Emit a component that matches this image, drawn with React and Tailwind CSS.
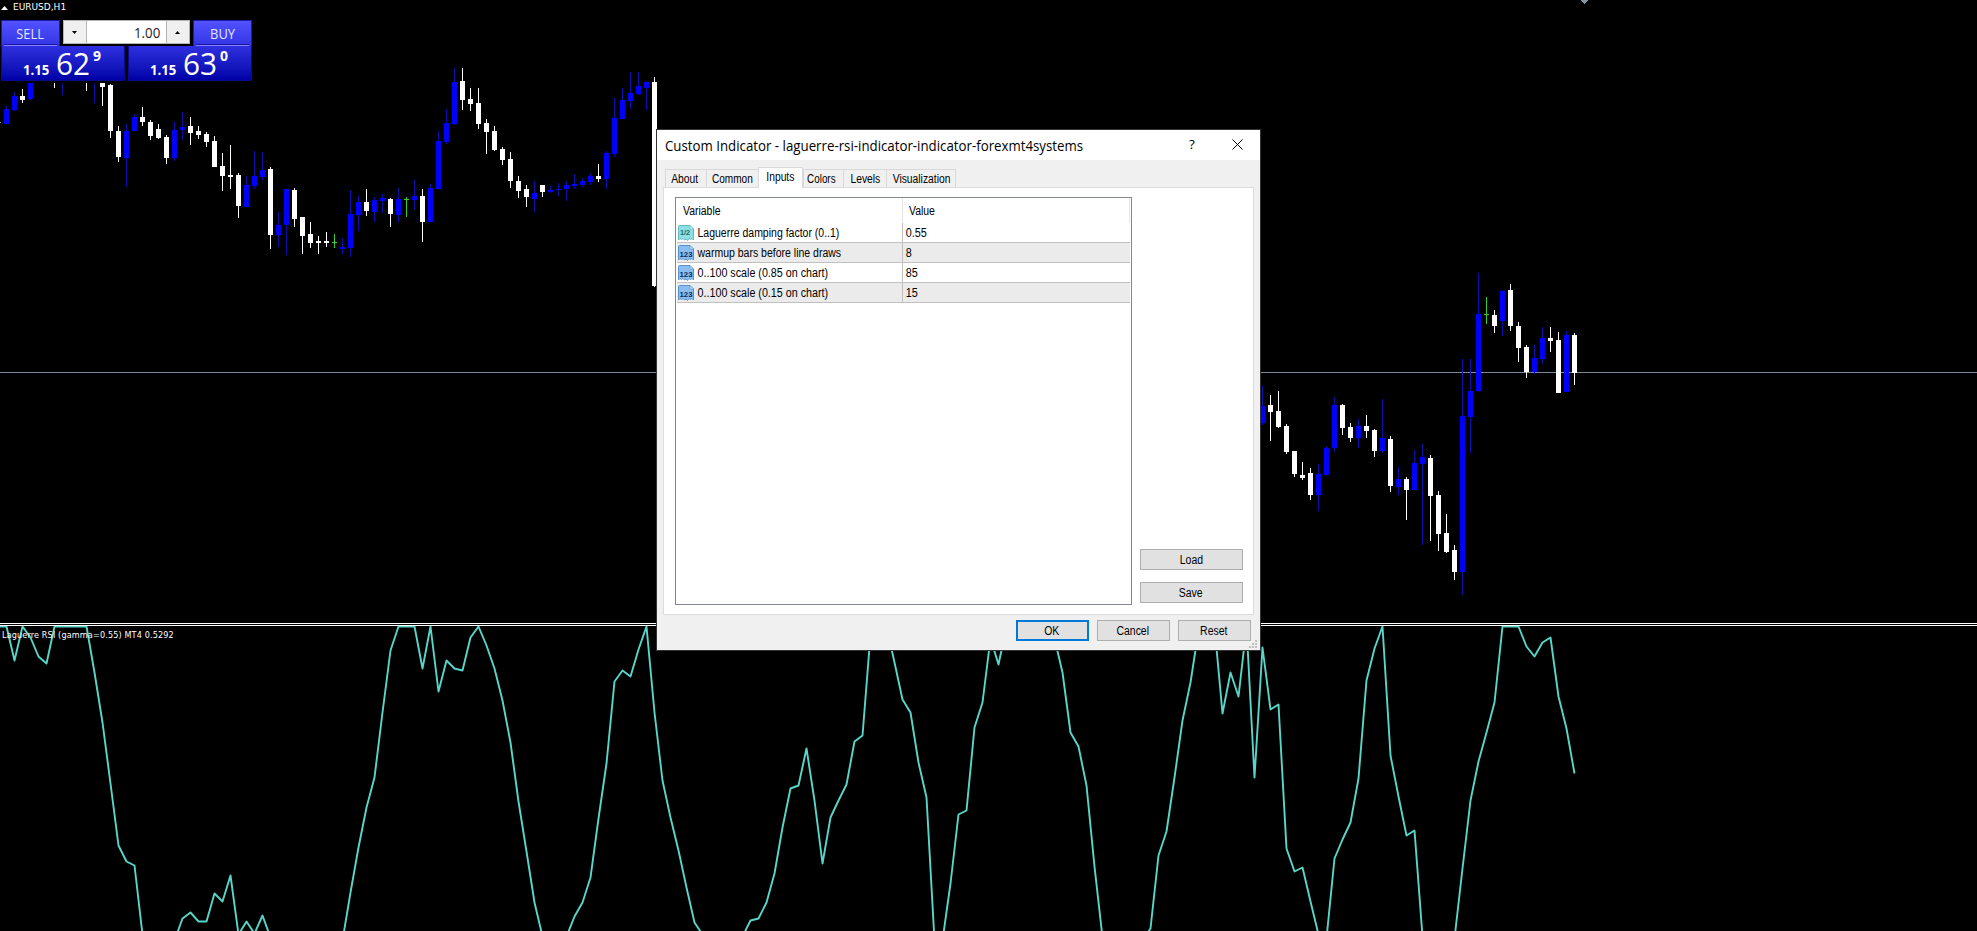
import clsx from "clsx";

// x of the wick, high, body top, body bottom, low, type (w = bear, b = bull, g = doji)
const candles = [
  [6, 106, 109, 124, 124, "b"],
  [14, 92, 96, 110, 111, "b"],
  [22, 89, 96, 100, 103, "w"],
  [30, 82, 82, 99, 100, "b"],
  [54, 80, 80, 80, 88, "w"],
  [62, 80, 80, 80, 95, "b"],
  [86, 80, 80, 80, 91, "w"],
  [94, 80, 80, 80, 103, "b"],
  [102, 80, 80, 87, 106, "w"],
  [110, 84, 85, 131, 138, "w"],
  [118, 126, 131, 157, 162, "w"],
  [126, 124, 131, 158, 187, "b"],
  [134, 114, 117, 131, 131, "b"],
  [142, 107, 117, 122, 126, "w"],
  [150, 120, 122, 136, 140, "w"],
  [158, 124, 129, 138, 139, "w"],
  [166, 135, 137, 158, 164, "w"],
  [174, 122, 130, 158, 161, "b"],
  [182, 112, 127, 130, 140, "b"],
  [190, 117, 126, 133, 145, "w"],
  [198, 126, 131, 135, 139, "w"],
  [206, 132, 134, 142, 147, "w"],
  [214, 136, 141, 167, 167, "w"],
  [222, 153, 166, 176, 191, "w"],
  [230, 145, 175, 177, 189, "w"],
  [238, 173, 175, 206, 218, "w"],
  [246, 176, 185, 207, 207, "b"],
  [254, 151, 176, 186, 189, "b"],
  [262, 152, 170, 177, 180, "b"],
  [270, 167, 169, 235, 249, "w"],
  [278, 212, 225, 235, 247, "b"],
  [286, 189, 189, 225, 255, "b"],
  [294, 188, 190, 219, 227, "w"],
  [302, 217, 217, 236, 254, "w"],
  [310, 222, 234, 243, 248, "w"],
  [318, 236, 241, 243, 254, "w"],
  [326, 232, 241, 243, 247, "w"],
  [334, 234, 242, 243, 248, "g"],
  [342, 238, 247, 249, 254, "b"],
  [350, 190, 214, 248, 257, "b"],
  [358, 196, 202, 215, 231, "b"],
  [366, 189, 202, 211, 216, "w"],
  [374, 197, 200, 212, 222, "b"],
  [382, 194, 198, 201, 213, "b"],
  [390, 198, 199, 214, 227, "w"],
  [398, 188, 199, 215, 222, "b"],
  [406, 197, 199, 200, 217, "g"],
  [414, 180, 196, 200, 210, "b"],
  [422, 189, 196, 222, 242, "w"],
  [430, 184, 188, 222, 222, "b"],
  [438, 131, 141, 189, 189, "b"],
  [446, 109, 123, 142, 144, "b"],
  [454, 68, 82, 124, 125, "b"],
  [462, 68, 81, 100, 110, "w"],
  [470, 88, 99, 104, 111, "w"],
  [478, 88, 103, 124, 129, "w"],
  [486, 119, 123, 132, 154, "w"],
  [494, 126, 131, 150, 151, "w"],
  [502, 147, 149, 160, 165, "w"],
  [510, 152, 159, 181, 188, "w"],
  [518, 176, 181, 191, 198, "w"],
  [526, 185, 189, 197, 207, "w"],
  [534, 181, 193, 199, 212, "b"],
  [542, 185, 185, 192, 197, "w"],
  [550, 186, 190, 192, 193, "b"],
  [558, 183, 189, 190, 196, "b"],
  [566, 181, 185, 189, 201, "b"],
  [574, 174, 184, 186, 189, "b"],
  [582, 178, 181, 185, 187, "b"],
  [590, 173, 176, 182, 185, "b"],
  [598, 164, 176, 179, 182, "w"],
  [606, 151, 153, 179, 189, "b"],
  [614, 98, 118, 154, 157, "b"],
  [622, 88, 100, 119, 119, "b"],
  [630, 72, 93, 101, 109, "b"],
  [638, 72, 86, 94, 95, "b"],
  [646, 81, 82, 88, 110, "b"],
  [654, 77, 82, 286, 287, "w"],
  [1262, 386, 406, 423, 425, "b"],
  [1270, 395, 405, 412, 441, "w"],
  [1278, 391, 411, 427, 428, "w"],
  [1286, 424, 426, 452, 454, "w"],
  [1294, 451, 451, 474, 477, "w"],
  [1302, 462, 475, 478, 480, "w"],
  [1310, 468, 473, 495, 500, "w"],
  [1318, 464, 474, 495, 511, "b"],
  [1326, 446, 448, 475, 475, "b"],
  [1334, 397, 405, 448, 452, "b"],
  [1342, 404, 405, 428, 435, "w"],
  [1350, 423, 427, 438, 442, "w"],
  [1358, 419, 426, 438, 448, "b"],
  [1366, 415, 426, 431, 438, "w"],
  [1374, 429, 430, 451, 457, "w"],
  [1382, 399, 438, 451, 453, "b"],
  [1390, 436, 439, 486, 492, "w"],
  [1398, 467, 479, 487, 495, "b"],
  [1406, 477, 479, 490, 520, "w"],
  [1414, 450, 463, 490, 490, "b"],
  [1422, 444, 457, 464, 545, "b"],
  [1430, 455, 458, 496, 541, "w"],
  [1438, 491, 495, 534, 551, "w"],
  [1446, 514, 533, 552, 553, "w"],
  [1454, 545, 550, 572, 580, "w"],
  [1462, 359, 416, 572, 595, "b"],
  [1470, 359, 391, 417, 453, "b"],
  [1478, 273, 314, 391, 392, "b"],
  [1486, 297, 314, 315, 324, "g"],
  [1494, 310, 315, 326, 333, "w"],
  [1502, 290, 291, 321, 336, "b"],
  [1510, 284, 290, 326, 331, "w"],
  [1518, 322, 326, 348, 362, "w"],
  [1526, 345, 347, 372, 378, "w"],
  [1534, 345, 358, 372, 374, "b"],
  [1542, 327, 338, 359, 364, "b"],
  [1550, 327, 338, 341, 352, "w"],
  [1558, 332, 340, 393, 393, "w"],
  [1566, 331, 335, 392, 392, "b"],
  [1574, 333, 335, 373, 385, "w"],
];

const colors = {
  w: { wick: "#ffffff", body: "#ffffff" },
  b: { wick: "#0f0fb0", body: "#0000ff" },
  g: { wick: "#32cd32", body: "#32cd32" },
};

// Laguerre RSI values, one list for every visible piece of the line
const rsi = [
  "-2,626 6,626 14,660 22,626 30,637 38,656 46,663 54,626 86,626 94,672 102,722 110,783 118,845 126,861 134,865 142,934",
  "174,940 182,918 190,912 198,921 206,921 214,893 222,901 230,875 238,934 246,921 254,933 262,915 270,937",
  "342,940 350,892 358,847 366,807 374,777 382,712 390,650 398,626 414,626 422,668 430,626 438,691 446,660 454,668 462,670 470,637 478,626 486,645 494,668 502,700 510,742 518,801 526,851 534,902 542,936",
  "566,936 574,916 582,902 590,877 598,818 606,763 614,681 622,670 630,676 638,649 646,626 654,712 662,780 670,817 678,850 686,887 694,922 702,934",
  "742,936 750,920 758,918 766,902 774,873 782,827 790,788 798,785 806,748 814,800 822,863 830,817 838,800 846,784 854,741 862,735 870,634 878,626 886,626 894,662 902,699 910,712 918,762 926,797 934,940",
  "942,940 950,883 958,814 966,810 974,727 982,702 990,638 998,664 1006,626 1046,626 1054,638 1062,672 1070,732 1078,746 1086,785 1094,866 1102,937",
  "1146,934 1150,928 1158,855 1166,831 1174,777 1182,720 1190,682 1198,630 1214,626 1222,713 1230,672 1238,696 1246,626 1254,777 1262,647 1270,709 1278,704 1286,848 1294,871 1302,867 1310,901 1318,934",
  "1326,938 1334,858 1342,839 1350,822 1358,778 1366,680 1374,648 1382,626 1390,755 1398,796 1406,835 1414,830 1422,936",
  "1454,938 1462,868 1470,800 1478,761 1486,732 1494,702 1502,626 1518,626 1526,646 1534,656 1542,642 1550,637 1558,696 1566,728 1574,773",
];

const tabs = [
  { name: "About", width: "w-[42px]", text: "-ml-0.5 scale-x-[0.86]" },
  { name: "Common", width: "w-[53px]", text: "scale-x-[0.84]" },
  { name: "Inputs", width: "w-[45px]", text: "-ml-px scale-x-[0.86]", active: true },
  { name: "Colors", width: "w-[41px]", text: "-ml-1 scale-x-[0.82]" },
  { name: "Levels", width: "w-[44px]", text: "ml-px scale-x-[0.86]" },
  { name: "Visualization", width: "w-[70px]", text: "ml-0.5 scale-x-[0.86]" },
];

const inputs = [
  { name: "Laguerre damping factor (0..1)", value: "0.55", double: true },
  { name: "warmup bars before line draws", value: "8" },
  { name: "0..100 scale (0.85 on chart)", value: "85" },
  { name: "0..100 scale (0.15 on chart)", value: "15" },
];

function Candle({ data }) {
  const [x, high, top, bottom, low, type] = data;
  const { wick, body } = colors[type];

  return (
    <g>
      <rect x={x} y={high} width="1" height={low - high} fill={wick} />
      <rect x={x - 2} y={top} width="5" height={bottom - top} fill={body} />
    </g>
  );
}

function PriceChart() {
  return (
    <svg
      className="block h-[623px] w-[1977px] shrink-0"
      viewBox="0 0 1977 623"
      shapeRendering="crispEdges"
    >
      <rect x="0" y="372" width="1977" height="1" fill="#778899" />
      {candles.map((c) => (
        <Candle key={c[0]} data={c} />
      ))}
      <rect x="0" y="122" width="1" height="1" fill="#8fb08f" />
      <path d="M1581 0h7v1h-1v1h-1v1h-1v1h-1v-1h-1v-1h-1v-1h-1z" fill="#8496a4" />
    </svg>
  );
}

function RsiChart() {
  return (
    <svg className="block h-[305px] w-[1977px] shrink-0" viewBox="0 626 1977 305">
      {rsi.map((points) => (
        <polyline
          key={points}
          points={points}
          transform="translate(0.5 0.5)"
          fill="none"
          stroke="#58d6ca"
          strokeWidth="1.9"
          strokeLinejoin="round"
        />
      ))}
    </svg>
  );
}

function QuoteButton({ label, small, big, sup, right }) {
  return (
    <div
      className={clsx(
        "flex flex-col w-[124px] font-['Open_Sans',sans-serif] text-white",
        right && "items-end"
      )}
    >
      <div className="flex flex-col items-center justify-between w-[59px] h-[26px] border border-b-0 border-[#1c1ca8] bg-linear-to-b from-[#5252ff] to-[#3333e4] pt-[3px]">
        <span className="text-[14px] leading-[19px] scale-x-[0.92] text-[#e6e6ff]">
          {label}
        </span>
        <div className="w-[53px] h-0.5 border-t border-[#1616a0] bg-[#8484ff]" />
      </div>
      <div className="flex flex-row w-full h-[35px] border border-t-0 border-[#0a0a90] bg-linear-to-b from-[#2f2fe0] to-[#0000a6] pl-[21px]">
        <span className="w-[33px] pt-[15px] text-[14px] leading-[18px] font-bold origin-left scale-x-[0.94]">
          {small}
        </span>
        <span className="w-[35px] pt-px text-[31px] leading-[32px] origin-left scale-x-[0.96]">
          {big}
        </span>
        <span className="ml-0.5 text-[14px] leading-[20px] font-bold">{sup}</span>
      </div>
    </div>
  );
}

function OneClickTrading() {
  return (
    <div className="absolute top-5 left-px w-[251px] h-[63px] bg-black">
      <div className="flex flex-row justify-between">
        <QuoteButton label="SELL" small="1.15" big="62" sup="9" />
        <QuoteButton label="BUY" small="1.15" big="63" sup="0" right />
      </div>
      <div className="absolute left-[60px] top-0 flex flex-row w-[131px] h-[26px] bg-black pl-0.5">
        <div className="flex flex-row w-[127px] h-6 border border-[#b4b4b4] bg-white">
          <div className="flex items-center justify-center w-[23px] border-r border-[#b4b4b4] bg-[#f0f0f0] pr-px">
            <svg width="5" height="3" viewBox="0 0 5 3">
              <path d="M0 0h5L2.5 3z" fill="#000" />
            </svg>
          </div>
          <span className="flex-1 pr-[6px] text-right font-['Open_Sans',sans-serif] text-[14px] leading-[23px] text-[#222] origin-right scale-x-[0.95]">
            1.00
          </span>
          <div className="flex items-center justify-center w-[23px] border-l border-[#b4b4b4] bg-[#f0f0f0] pr-px">
            <svg width="5" height="3" viewBox="0 0 5 3">
              <path d="M0 3h5L2.5 0z" fill="#000" />
            </svg>
          </div>
        </div>
      </div>
    </div>
  );
}

function InputIcon({ double }) {
  const dark = double ? "#126a72" : "#06305f";

  return (
    <svg className="mt-0.5 ml-px shrink-0" width="16" height="16" viewBox="0 0 16 16">
      <path
        d="M0.5 1.5Q0.5 0.5 1.5 0.5H12L15.5 4V15L14 13.5L12.5 14.5L11 13.5L9.5 15.5L8 14L6.5 15L5 13.5L3.5 14.5L2 13.5L0.5 15z"
        fill={double ? "#8fdfe2" : "#8abdf0"}
        stroke={double ? "#55b4b9" : "#4f8ac6"}
        strokeWidth="0.9"
      />
      <path
        d="M12 0.5L15.5 4H12z"
        fill={double ? "#d4f5f5" : "#d5e8fb"}
        stroke={double ? "#55b4b9" : "#4f8ac6"}
        strokeWidth="0.5"
      />
      <text
        x={double ? "7" : "8"}
        y={double ? "9.5" : "11.5"}
        textAnchor="middle"
        fontFamily="Liberation Sans, sans-serif"
        fontWeight="bold"
        fontSize="8"
        textLength={double ? "10" : "13"}
        lengthAdjust="spacingAndGlyphs"
        fill={dark}
      >
        {double ? "1/2" : "123"}
      </text>
    </svg>
  );
}

function DialogButton({ children, className, primary }) {
  return (
    <button
      className={clsx(
        "flex items-center justify-center h-[21px] bg-[#e1e1e1]",
        primary ? "border-2 border-[#0078d7]" : "border border-[#adadad]",
        className
      )}
    >
      <span className="pt-px pr-px scale-x-[0.87]">{children}</span>
    </button>
  );
}

function Tab({ name, width, text, active }) {
  return (
    <div
      className={clsx(
        "flex justify-center border border-b-0 border-[#d9d9d9]",
        width,
        active
          ? "relative h-[21px] -mb-px bg-white pt-px leading-4"
          : "h-[18px] -mr-px bg-[#f0f0f0] pt-px leading-[17px]"
      )}
    >
      <span className={text}>{name}</span>
    </div>
  );
}

function InputsTable() {
  return (
    <div className="flex flex-col w-[457px] h-[408px] border border-[#828790] bg-white px-px">
      <div className="flex flex-row h-[25px] items-center shrink-0">
        <div className="flex items-center w-[226px] h-full border-r border-[#e5e5e5] pl-1.5">
          <span className="pt-px origin-left scale-x-[0.87]">Variable</span>
        </div>
        <div className="flex items-center flex-1 h-full border-r border-[#e5e5e5] pl-1.5">
          <span className="pt-px origin-left scale-x-[0.87]">Value</span>
        </div>
      </div>
      {inputs.map((row, i) => (
        <div
          key={row.name}
          className={clsx(
            "flex flex-row h-5 shrink-0 border-b border-[#c0c0c0] leading-[21px]",
            i % 2 === 1 && "bg-[#ebebeb]"
          )}
        >
          <div className="flex flex-row w-[226px] border-r border-[#c0c0c0]">
            <InputIcon double={row.double} />
            <span
              className={clsx(
                "pl-1 origin-left",
                i < 2 ? "scale-x-[0.875]" : "scale-x-[0.893]"
              )}
            >
              {row.name}
            </span>
          </div>
          <span className="pl-[3px] origin-left scale-x-[0.9]">{row.value}</span>
        </div>
      ))}
    </div>
  );
}

function IndicatorDialog() {
  return (
    <div className="absolute left-[657px] top-[130px] flex flex-col w-[603px] h-[520px] bg-[#f0f0f0] font-['Liberation_Sans',Arial,sans-serif] text-xs text-black whitespace-nowrap shadow-[0_0_0_1px_#333]">
      <div className="flex flex-row items-center h-[30px] bg-white pl-2 font-['Open_Sans',sans-serif] text-[14.5px]">
        <span className="w-[524px] pt-px origin-left scale-x-[0.915]">
          Custom Indicator - laguerre-rsi-indicator-indicator-forexmt4systems
        </span>
        <span className="w-[43px] pb-0.5 text-[13.5px]">?</span>
        <svg className="-mt-px" width="11" height="11" viewBox="0 0 11 11">
          <path d="M0.5 0.5l10 10M10.5 0.5l-10 10" stroke="#000" strokeWidth="1" />
        </svg>
      </div>

      <div className="flex flex-row items-end h-[27px] pl-2">
        {tabs.map((tab) => (
          <Tab key={tab.name} {...tab} />
        ))}
      </div>

      <div className="flex flex-row ml-1.5 w-[591px] h-[428px] border border-[#dcdcdc] bg-white pt-[9px] pl-[11px]">
        <InputsTable />
        <div className="flex flex-col justify-end gap-3 h-[406px] pl-2">
          <DialogButton className="w-[103px]">Load</DialogButton>
          <DialogButton className="w-[103px]">Save</DialogButton>
        </div>
      </div>

      <div className="flex flex-row justify-end gap-2 pt-[5px] pr-[9px]">
        <DialogButton className="w-[73px]" primary>
          OK
        </DialogButton>
        <DialogButton className="w-[73px]">Cancel</DialogButton>
        <DialogButton className="w-[73px]">Reset</DialogButton>
      </div>

      <svg
        className="absolute right-[3px] bottom-0.5"
        width="8"
        height="8"
        viewBox="0 0 8 8"
        fill="#bfbfbf"
      >
        <path d="M6 0h2v2H6zM6 3h2v2H6zM3 3h2v2H3zM6 6h2v2H6zM3 6h2v2H3zM0 6h2v2H0z" />
      </svg>
    </div>
  );
}

export default function App() {
  return (
    <div className="relative flex flex-col w-[1977px] h-[931px] overflow-hidden bg-black">
      <PriceChart />
      <div className="h-[3px] shrink-0 border-y border-white bg-black" />
      <RsiChart />

      <div className="absolute top-px left-0 flex flex-row items-center gap-[5px] pl-px font-['DejaVu_Sans',sans-serif] text-[9px] leading-[13px] text-white">
        <svg width="7" height="4" viewBox="0 0 7 4">
          <path d="M0 4h7L3.5 0z" fill="#fff" />
        </svg>
        EURUSD,H1
      </div>
      <span className="absolute top-[629px] left-0.5 font-['DejaVu_Sans_Condensed','DejaVu_Sans',sans-serif] text-[9px] leading-[13px] tracking-[0.14px] text-white whitespace-nowrap">
        Laguerre RSI (gamma=0.55) MT4 0.5292
      </span>

      <OneClickTrading />
      <IndicatorDialog />
    </div>
  );
}
